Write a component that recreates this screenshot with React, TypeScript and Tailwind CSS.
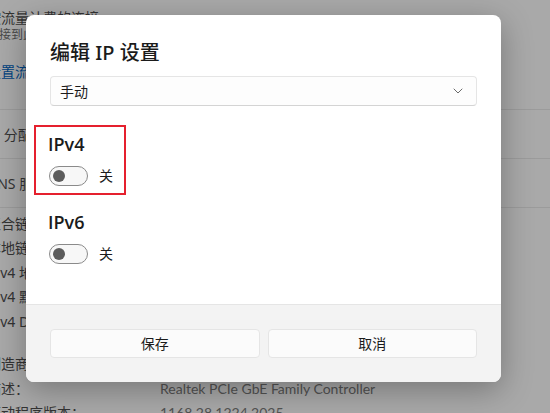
import { ChevronDown } from "lucide-react";

const font = "font-['Noto_Sans','Noto_Sans_CJK_SC',sans-serif]";

function InfoRow({ label, value }: { label: string; value?: string }) {
  return (
    <div className="flex h-[24.5px] items-center">
      <span className="w-[173px] shrink-0 text-[#4a4a4a]">{label}</span>
      <span className="font-['Lato','Noto_Sans_CJK_SC',sans-serif] text-[#777777]">{value}</span>
    </div>
  );
}

function Toggle() {
  return (
    <div className="ml-px flex items-center gap-[11px]">
      <div className="flex h-5 w-[39px] items-center rounded-full border border-[#8a8a8a] bg-[#f7f7f7]">
        <div className="ml-[3px] h-3 w-3 rounded-full bg-[#5c5c5c]" />
      </div>
      <span className="text-[14px] text-[#1b1b1b]">关</span>
    </div>
  );
}

function SettingsPage() {
  return (
    <div className="flex flex-col text-[14px]">
      <div className="ml-[-13px] flex h-[109px] flex-col pt-[9px]">
        <span className="leading-[18px] text-[#4a4a4a]">按流量计费的连接</span>
        <span className="text-[12px] leading-4 text-[#6a6a6a]">连接到此网络时，某些应用的工作方式可能会有所不同</span>
        <span className="mt-[19px] leading-5 text-[#005fb8]">设置流量上限以帮助控制此网络上的数据使用量</span>
      </div>
      <div className="h-px bg-[#dedede]" />
      <div className="ml-[-13px] flex h-[48px] items-center text-[#4a4a4a]">IP 分配：</div>
      <div className="h-px bg-[#dedede]" />
      <div className="ml-[-13px] flex h-[48px] items-center text-[#4a4a4a]">DNS 服务器分配：</div>
      <div className="h-px bg-[#dedede]" />
      <div className="ml-[-13px] mt-[3px] flex flex-col">
        <InfoRow label="聚合链接速度(接收/传输)：" value="1000/1000 (Mbps)" />
        <InfoRow label="本地链接 IPv6 地址：" value="fe80::5d2a:91c4:7b3e:12f0%7" />
        <InfoRow label="IPv4 地址：" value="192.168.1.105" />
        <InfoRow label="IPv4 默认网关：" value="192.168.1.1" />
        <InfoRow label="IPv4 DNS 服务器：" value="192.168.1.1 (未加密)" />
        <div className="mt-[18px]" />
        <InfoRow label="制造商：" value="Realtek" />
        <InfoRow label="描述：" value="Realtek PCIe GbE Family Controller" />
        <InfoRow label="驱动程序版本：" value="1168.28.1224.2025" />
      </div>
    </div>
  );
}

export default function App() {
  return (
    <div className={`relative h-[413px] w-[550px] overflow-hidden bg-[#f3f3f3] ${font}`}>
      <SettingsPage />
      <div className="absolute inset-0 bg-black/30" />

      <div className="absolute left-[26px] top-[15px] flex h-[367px] w-[475px] flex-col overflow-hidden rounded-lg bg-white shadow-[0_8px_32px_rgba(0,0,0,0.3)]">
        <div className="flex flex-1 flex-col px-6 pt-6">
          <h1 className="text-[20px] font-medium leading-7 text-[#1b1b1b]">编辑 IP 设置</h1>

          <button className="mt-[9px] flex h-[30px] items-center justify-between rounded border border-[#e5e5e5] border-b-[#d4d4d4] bg-[#fdfdfd] pl-[9px] pr-[10px] text-[14px] text-[#1b1b1b]">
            <span>手动</span>
            <ChevronDown size={16} strokeWidth={1.4} className="text-[#606060]" />
          </button>

          {/* IPv4 section, outlined */}
          <div className="ml-[-16px] mt-[19px] flex w-[92px] flex-col border-2 border-[#e5202e] pb-[7px] pl-3 pt-[5px]">
            <span className="font-['Open_Sans',sans-serif] text-[18px] font-semibold leading-6 text-[#1b1b1b]">IPv4</span>
            <div className="mt-[9px]">
              <Toggle />
            </div>
          </div>

          <div className="ml-[-2px] mt-[15px] flex flex-col">
            <span className="font-['Open_Sans',sans-serif] text-[18px] font-semibold leading-6 text-[#1b1b1b]">IPv6</span>
            <div className="mt-[9px]">
              <Toggle />
            </div>
          </div>
        </div>

        <div className="grid h-[78px] shrink-0 grid-cols-2 items-center gap-2 border-t border-[#e5e5e5] bg-[#f3f3f3] px-6">
          <button className="h-[29px] rounded border border-[#e5e5e5] bg-[#fbfbfb] text-[14px] text-[#1b1b1b]">保存</button>
          <button className="h-[29px] rounded border border-[#e5e5e5] bg-[#fbfbfb] text-[14px] text-[#1b1b1b]">取消</button>
        </div>
      </div>
    </div>
  );
}
